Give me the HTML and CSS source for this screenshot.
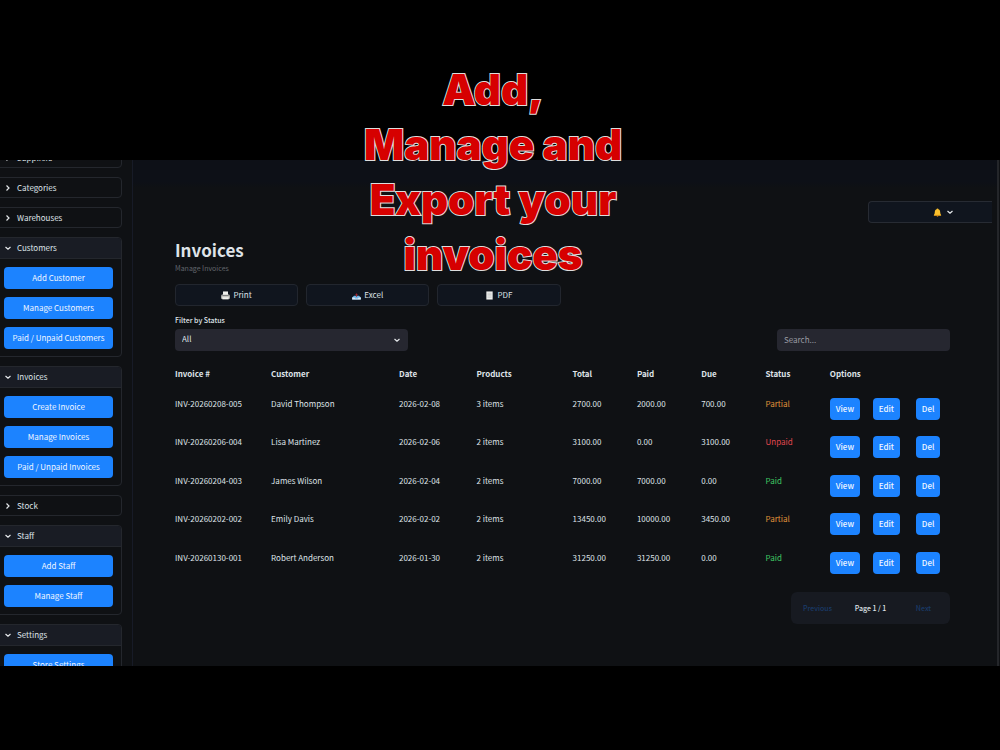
FILE: index.html
```html
<!DOCTYPE html>
<html lang="en">
<head>
<meta charset="utf-8">
<title>Invoices</title>
<link rel="stylesheet" href="styles.css">
</head>
<body>
<svg class="defs" aria-hidden="true">
  <symbol id="right" viewBox="0 0 8 8"><path d="M2.5 1.5 5 4 2.5 6.5"/></symbol>
  <symbol id="down" viewBox="0 0 8 8"><path d="M1.5 3 4 5.2 6.5 3"/></symbol>
</svg>
<div class="app">
  <nav class="side">
    <section class="group"><button class="head"><svg class="chev"><use href="#right"/></svg>Suppliers</button></section>
    <section class="group"><button class="head"><svg class="chev"><use href="#right"/></svg>Categories</button></section>
    <section class="group"><button class="head"><svg class="chev"><use href="#right"/></svg>Warehouses</button></section>
    <section class="group open"><button class="head"><svg class="chev"><use href="#down"/></svg>Customers</button>
      <div class="links"><button class="primary">Add Customer</button><button class="primary">Manage Customers</button><button class="primary">Paid / Unpaid Customers</button></div></section>
    <section class="group open"><button class="head"><svg class="chev"><use href="#down"/></svg>Invoices</button>
      <div class="links"><button class="primary">Create Invoice</button><button class="primary">Manage Invoices</button><button class="primary">Paid / Unpaid Invoices</button></div></section>
    <section class="group"><button class="head"><svg class="chev"><use href="#right"/></svg>Stock</button></section>
    <section class="group open"><button class="head"><svg class="chev"><use href="#down"/></svg>Staff</button>
      <div class="links"><button class="primary">Add Staff</button><button class="primary">Manage Staff</button></div></section>
    <section class="group open"><button class="head"><svg class="chev"><use href="#down"/></svg>Settings</button>
      <div class="links"><button class="primary">Store Settings</button></div></section>
  </nav>
  <main class="main">
    <div class="topbar">
      <button class="bell" aria-label="Notifications">
        <svg class="emoji" viewBox="0 0 10 10"><path d="M5 .5c.7 0 1 .4 1 .9C7.7 2 8 3.500 8.100 5.500 8.200 6.700 9 7 9 8.300H1C1 7 1.800 6.700 1.900 5.500 2 3.500 2.300 2 4 1.400 4 .9 4.300.5 5 .5Z" fill="#fbc02d"/><path d="M1 7.600h8v.9H1Z" fill="#e59a13"/><circle cx="5" cy="8.900" r=".9" fill="#d98a12"/></svg>
        <svg class="chev"><use href="#down"/></svg>
      </button>
    </div>
    <div class="content">
      <h1 class="title">Invoices</h1>
      <p class="subtitle">Manage Invoices</p>
      <div class="exports">
        <button class="ghost"><svg class="emoji" viewBox="0 0 10 10"><path d="M2.200.5h5.600v4H2.200Z" fill="#efefec"/><path d="M1 4h8l.8 1.200V8.500H.2V5.200Z" fill="#c9c9c4"/><path d="M1.500 4.500h7v1h-7Z" fill="#77797a"/><path d="M1.500 7h7v2.300h-7Z" fill="#f3f3ef"/></svg>Print</button>
        <button class="ghost"><svg class="emoji" viewBox="0 0 10 10"><path d="M2.200 5.300h5.600L9.800 7.200v2.300H.2V7.200Z" fill="#6fb5e8"/><path d="M.2 7.200h2.500l.7 1h3.200l.7-1h2.500v2.300H.2Z" fill="#dfeaf2"/><path d="M5 2.500 6.500 4.400H5.600v2H4.400v-2H3.500Z" fill="#a3262f"/></svg>Excel</button>
        <button class="ghost"><svg class="emoji" viewBox="0 0 10 10"><path d="M1.500.5h7v9h-7Z" fill="#f0f0ee"/><path d="M2.700 2.500h4.600M2.700 4h4.600M2.700 5.500h4.600M2.700 7h4.600" stroke="#b5b8ba" stroke-width=".6"/></svg>PDF</button>
      </div>
      <label class="label" for="status">Filter by Status</label>
      <div class="filters">
        <div class="pick"><select id="status" class="field"><option>All</option></select><svg class="chev"><use href="#down"/></svg></div>
        <input class="field search" type="search" placeholder="Search..." aria-label="Search">
      </div>
      <table class="table">
        <colgroup><col class="c96"><col class="c128"><col class="c77"><col class="c96"><col class="c64"><col class="c64"><col class="c64"><col class="c64"><col></colgroup>
        <thead><tr><th>Invoice #</th><th>Customer</th><th>Date</th><th>Products</th><th>Total</th><th>Paid</th><th>Due</th><th>Status</th><th>Options</th></tr></thead>
        <tbody>
          <tr><td>INV-20260208-005</td><td>David Thompson</td><td>2026-02-08</td><td>3 items</td><td>2700.00</td><td>2000.00</td><td>700.00</td><td class="partial">Partial</td><td><div class="options"><button class="primary">View</button><button class="primary">Edit</button><button class="primary">Del</button></div></td></tr>
          <tr><td>INV-20260206-004</td><td>Lisa Martinez</td><td>2026-02-06</td><td>2 items</td><td>3100.00</td><td>0.00</td><td>3100.00</td><td class="unpaid">Unpaid</td><td><div class="options"><button class="primary">View</button><button class="primary">Edit</button><button class="primary">Del</button></div></td></tr>
          <tr><td>INV-20260204-003</td><td>James Wilson</td><td>2026-02-04</td><td>2 items</td><td>7000.00</td><td>7000.00</td><td>0.00</td><td class="paid">Paid</td><td><div class="options"><button class="primary">View</button><button class="primary">Edit</button><button class="primary">Del</button></div></td></tr>
          <tr><td>INV-20260202-002</td><td>Emily Davis</td><td>2026-02-02</td><td>2 items</td><td>13450.00</td><td>10000.00</td><td>3450.00</td><td class="partial">Partial</td><td><div class="options"><button class="primary">View</button><button class="primary">Edit</button><button class="primary">Del</button></div></td></tr>
          <tr><td>INV-20260130-001</td><td>Robert Anderson</td><td>2026-01-30</td><td>2 items</td><td>31250.00</td><td>31250.00</td><td>0.00</td><td class="paid">Paid</td><td><div class="options"><button class="primary">View</button><button class="primary">Edit</button><button class="primary">Del</button></div></td></tr>
        </tbody>
      </table>
      <div class="pager"><button class="turn" disabled>Previous</button><span>Page 1 / 1</span><button class="turn" disabled>Next</button></div>
    </div>
  </main>
</div>
<p class="caption">Add,<br>Manage and<br>Export your<br>invoices</p>
</body>
</html>
```

FILE: styles.css
```css
* { box-sizing: border-box; }
body {
  margin: 0;
  height: 100vh;
  padding: 160px 0 84px;
  background: #000;
  color: #dfe3e8;
  font: 8px/12px "Noto Sans CJK SC", "Noto Sans", sans-serif;
  overflow: hidden;
}
button, input, select { font: inherit; color: inherit; margin: 0; }
button { border: 0; background: none; padding: 0; white-space: nowrap; }
.defs { position: absolute; width: 0; height: 0; }
.chev { width: 8px; height: 8px; flex: none; fill: none; stroke: #e4e7ea; stroke-width: 1.2; }
.emoji { width: 9px; height: 9px; flex: none; }

.app { display: flex; height: 100%; overflow: hidden; background: #0f1114; }
.side {
  flex: none;
  width: 138px;
  margin: -13px 0 0 -5px;
  padding-right: 10px;
  border-right: 1px solid #171b27;
  display: flex;
  flex-direction: column;
  gap: 9px;
}
.group { flex: none; border: 1px solid #24272d; border-radius: 4px; overflow: hidden; }
.head { display: flex; align-items: center; gap: 5px; width: 100%; height: 19px; padding-left: 8px; }
.open .head { height: 21px; background: #191c24; border-bottom: 1px solid #24272d; }
.links { display: flex; flex-direction: column; gap: 8px; padding: 8px 8px 7px; }
.primary { height: 22px; border-radius: 4px; background: #1c83ff; color: #f0f6ff; }

.main { flex: 1; min-width: 0; margin-right: 1px; border-right: 2px solid #24262a; background: linear-gradient(#0d1017 0 22px, #0f1114 28px); }
.topbar { display: flex; justify-content: flex-end; padding: 41px 5px 0 0; }
.bell {
  display: flex; align-items: center; justify-content: center; gap: 4px;
  width: 124px; height: 22px; padding-left: 26px;
  background: #10151e; border: 1px solid #272b33; border-right: 0; border-radius: 4px 0 0 4px;
}
.content { padding: 15px 47px 0 42px; }
.title { margin: 0; font-size: 17px; line-height: 24px; font-weight: 700; }
.subtitle { margin: 0; font-size: 7px; color: #62666c; }
.exports { display: flex; gap: 8px; width: calc(50% - 2px); margin: 10px 0 8px; }
.ghost { flex: 1; height: 22px; display: flex; align-items: center; justify-content: center; gap: 3px; background: #10151e; border: 1px solid #22262e; border-radius: 4px; }
.label { display: block; font-size: 7px; font-weight: 500; margin-bottom: 3px; }
.filters { display: flex; justify-content: space-between; }
.pick { position: relative; width: 30%; }
.pick .chev { position: absolute; right: 7px; top: 7px; }
.field { display: block; width: 100%; height: 22px; padding: 0 7px 2px; border: 0; border-radius: 4px; background: #262730; appearance: none; }
.search { width: 173px; }
.search::placeholder { color: #9a9ca3; opacity: 1; }

.table { width: 100%; table-layout: fixed; border-collapse: collapse; margin-top: 17px; }
.c96 { width: 12.4%; }
.c128 { width: 16.5%; }
.c77 { width: 10%; }
.c64 { width: 8.3%; }
th, td { padding: 0; text-align: left; vertical-align: top; white-space: nowrap; }
th { height: 30px; font-weight: 700; }
td { height: 38px; }
tr:nth-child(even) td { height: 39px; }
.partial { color: #e0933a; }
.unpaid { color: #e0474f; }
.paid { color: #3fc763; }
.options { display: grid; grid-template-columns: 43px 43px auto; justify-items: start; }
.options .primary { padding: 0 6px; font-weight: 500; }
.pager { width: 159px; height: 32px; margin: 2px 0 0 auto; display: grid; grid-template-columns: 1fr 1fr 1fr; align-items: center; justify-items: center; border-radius: 6px; background: #171a21; font-weight: 500; font-size: 7px; }
.turn { color: #1a3a68; }

.caption {
  position: absolute; top: 62px; left: 343px; width: 300px; margin: 0;
  font: 900 42px/55px Inter, "Liberation Sans", sans-serif;
  text-align: center; color: #d60000; white-space: nowrap;
  -webkit-text-stroke: 2px #ddd; paint-order: stroke fill;
}
```
